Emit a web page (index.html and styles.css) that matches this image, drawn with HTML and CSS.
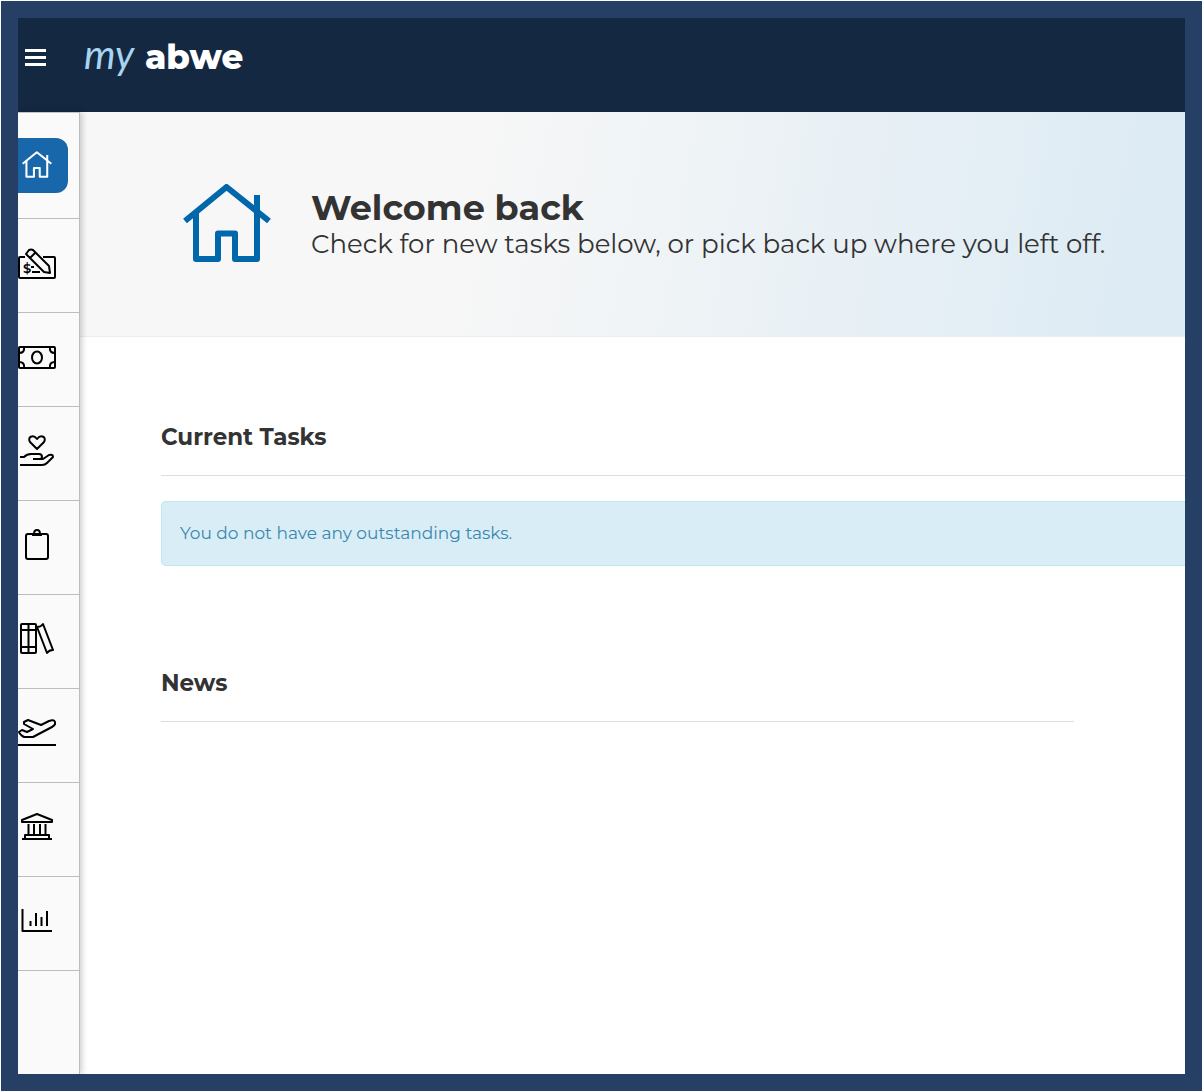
FILE: index.html
```html
<!DOCTYPE html>
<html lang="en">
<head>
  <meta charset="UTF-8" />
  <meta name="viewport" content="width=device-width, initial-scale=1" />
  <title>myABWE - Home</title>
  <link rel="stylesheet" href="styles.css">
</head>
<body>
  <svg class="symbols" aria-hidden="true">
    <symbol id="house" viewBox="0 0 88 78">
      <path d="M2 37 43.500 3 86 37M13 29V75H35V49.500H52V75H74V11" />
    </symbol>
  </svg>

  <div class="frame">
    <header class="topbar">
      <button class="menu-toggle" type="button" aria-label="Menu">
        <span></span>
        <span></span>
        <span></span>
      </button>
      <a class="logo" href="#"><span class="logo-my">my</span><span class="logo-abwe">abwe</span></a>
    </header>

    <div class="body">
      <nav class="sidebar" aria-label="Main">
        <a class="item active" href="#" aria-label="Home">
          <span class="tile"><svg class="home-icon"><use href="#house" /></svg></span>
        </a>
        <a class="item" href="#" aria-label="Expenses">
          <svg class="icon" viewBox="0 0 38 38">
            <path d="M7 12H2Q1 12 1 13V32Q1 33 2 33H36Q37 33 37 32V13Q37 12 36 12H25M8 9 11 5Q13 4 15 5L31 21 32 28 26 27ZM12 13 17 8M13 22H16M14 27H22" />
            <text x="5" y="28">$</text>
          </svg>
        </a>
        <a class="item" href="#" aria-label="Money">
          <svg class="icon" viewBox="0 0 38 38">
            <rect x="1" y="8" width="36" height="21" rx="1" />
            <ellipse cx="19" cy="18.500" rx="5" ry="6" />
            <path d="M6 8Q7 14 1 14M32 8Q31 14 37 14M6 29Q7 23 1 23M32 29Q31 23 37 23" />
          </svg>
        </a>
        <a class="item" href="#" aria-label="Giving">
          <svg class="icon" viewBox="0 0 38 38">
            <path d="M19 16 12 9C9 4 15 1 19 6C23 1 29 4 26 9ZM2 24H6Q9 21 13 21H21Q24 21 24 24 24 26 21 26H15M22 26H25L31 22Q35 21 35 24L29 30Q27 32 24 32H2" />
          </svg>
        </a>
        <a class="item" href="#" aria-label="Forms">
          <svg class="icon" viewBox="0 0 38 38">
            <rect x="8" y="7" width="22" height="25" rx="2" />
            <path d="M14 8H24" />
            <path d="M16 7Q16 3 19 3 22 3 22 7" />
          </svg>
        </a>
        <a class="item" href="#" aria-label="Library">
          <svg class="icon" viewBox="0 0 38 38">
            <rect x="3" y="3" width="15" height="29" rx="1" />
            <path d="M10.500 3V32M3 9H18M3 26H18M19 6Q23 6 25 3L35 29Q31 29 29 32Z" />
          </svg>
        </a>
        <a class="item" href="#" aria-label="Travel">
          <svg class="icon" viewBox="0 0 38 38">
            <path d="M6 7 10 5 23 10 31 6Q36 4 37 7 38 10 34 12L15 22H6Q2 20 1 17L4 15 9 17 15 14 6 9ZM0 30H38" />
          </svg>
        </a>
        <a class="item" href="#" aria-label="Finance">
          <svg class="icon" viewBox="0 0 38 38">
            <path d="M4 13V11L19 5 34 11V13ZM10.500 15V26M16 15V26M22 15V26M27.500 15V26M4 30H34M7 30V26H31V30" />
          </svg>
        </a>
        <a class="item" href="#" aria-label="Reports">
          <svg class="icon" viewBox="0 0 38 38">
            <path d="M4.500 6V28H34M12.500 18V23M18 10V23M23.500 14V23M29 8V23" />
          </svg>
        </a>
      </nav>

      <main class="content">
        <section class="hero">
          <svg class="hero-icon" aria-hidden="true"><use href="#house" /></svg>
          <div class="hero-text">
            <h1>Welcome back</h1>
            <p>Check for new tasks below, or pick back up where you left off.</p>
          </div>
        </section>

        <section class="panel tasks">
          <h2>Current Tasks</h2>
          <div class="alert">You do not have any outstanding tasks.</div>
        </section>

        <section class="panel news">
          <h2>News</h2>
        </section>
      </main>
    </div>
  </div>
</body>
</html>
```

FILE: styles.css
```css
* {
  box-sizing: border-box;
}

body {
  margin: 0;
  padding: 1px;
  background: #fff;
  color: #333;
  font-family: Montserrat, Inter, sans-serif;
}

.symbols {
  position: absolute;
  width: 0;
  height: 0;
}

.frame {
  display: flex;
  flex-direction: column;
  min-height: calc(100vh - 2px);
  border: 17px solid #264065;
  overflow: hidden;
}

/* top bar */
.topbar {
  display: flex;
  align-items: flex-start;
  height: 94px;
  background: #152842;
}

.menu-toggle {
  display: flex;
  flex-direction: column;
  gap: 4px;
  width: 21px;
  margin: 31px 38px 0 7px;
  padding: 0;
  border: 0;
  background: none;
}

.menu-toggle span {
  height: 3px;
  background: #fff;
}

.logo {
  display: flex;
  align-items: baseline;
  gap: 6px;
  margin-top: 12px;
  line-height: 48px;
  text-decoration: none;
}

.logo-my {
  width: 55px;
  color: #a9d4f1;
  font-family: Lato, sans-serif;
  font-size: 40px;
  font-style: italic;
  font-weight: 400;
}

.logo-abwe {
  color: #fff;
  font-family: Montserrat, Inter, sans-serif;
  font-size: 34px;
  font-weight: 800;
}

.body {
  display: flex;
  flex: 1;
}

/* sidebar */
.sidebar {
  position: relative;
  z-index: 1;
  flex: none;
  width: 62px;
  border-top: 1px solid #c4c4c4;
  border-right: 1px solid #bdbdbd;
  background: #fafafa;
  box-shadow: 2px 0 6px rgba(0, 0, 0, 0.2);
}

.item {
  display: flex;
  align-items: center;
  height: 94px;
  padding-bottom: 3px;
  border-bottom: 1px solid #bdbdbd;
}

.item.active {
  height: 106px;
  padding-bottom: 0;
}

.tile {
  display: flex;
  align-items: center;
  width: 50px;
  height: 55px;
  padding: 0 0 2px 4px;
  border-radius: 0 12px 12px 0;
  background: #1767aa;
}

.icon {
  width: 38px;
  height: 38px;
  fill: none;
  stroke: #000;
  stroke-width: 2;
  stroke-linejoin: round;
}

.icon text {
  fill: #000;
  stroke: none;
  font-size: 13px;
  font-weight: 600;
}

.home-icon,
.hero-icon {
  fill: none;
  stroke-width: 6;
  stroke-linejoin: round;
}

.home-icon {
  width: 30px;
  height: 27px;
  stroke: #fff;
}

.hero-icon {
  flex: none;
  width: 88px;
  height: 78px;
  stroke: #0067ab;
}

/* page content */
.content {
  flex: 1;
  min-width: 0;
}

.hero {
  display: flex;
  align-items: center;
  gap: 40px;
  height: 225px;
  padding: 0 20px 2px 103px;
  border-bottom: 1px solid #ececec;
  background: linear-gradient(100deg, #f7f7f7 35%, #ddebf4 95%);
}

.hero-text {
  padding-top: 2px;
}

h1 {
  margin: 0;
  font-size: 35px;
  font-weight: 700;
  line-height: 40px;
}

.hero p {
  margin: 0;
  font-size: 26px;
  font-weight: 400;
  line-height: 32px;
}

.panel {
  margin: 0 111px 0 81px;
}

.tasks {
  margin-right: 0;
  padding-top: 84px;
}

.news {
  padding-top: 101px;
}

h2 {
  margin: 0;
  padding-bottom: 22px;
  border-bottom: 1px solid #dedede;
  font-size: 23px;
  font-weight: 700;
  line-height: 32px;
}

.alert {
  margin-top: 25px;
  padding: 18px;
  border: 1px solid #bce8f1;
  border-right: 0;
  border-radius: 5px 0 0 5px;
  background: #d9edf7;
  color: #3a87ad;
  font-size: 17px;
  line-height: 27px;
}
```
